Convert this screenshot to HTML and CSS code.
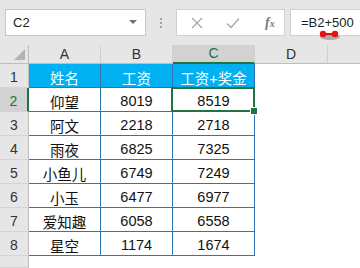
FILE: index.html
```html
<!doctype html>
<html lang="zh">
<head>
  <meta charset="utf-8">
  <title>工资表</title>
  <link rel="stylesheet" href="styles.css">
</head>
<body>
  <div class="bar">
    <div class="namebox">
      <span>C2</span>
      <span class="caret"></span>
    </div>
    <div class="dots"><i></i><i></i><i></i></div>
    <div class="buttons">
      <svg class="ico" width="14" height="14" viewBox="0 0 14 14"><path d="M2 2L12 12M12 2L2 12" stroke="#a8a8a8" stroke-width="1.3" fill="none"/></svg>
      <svg class="ico" width="16" height="14" viewBox="0 0 16 14"><path d="M2 7.5L6 11.5L14 2.5" stroke="#a8a8a8" stroke-width="1.4" fill="none"/></svg>
      <span class="fx">f<small>x</small></span>
    </div>
    <div class="formula">
      <span>=B2+500</span>
      <svg class="mark" width="24" height="12" viewBox="0 0 24 12">
        <ellipse cx="12" cy="8" rx="10" ry="3" fill="#000" opacity="0.25"/>
        <line x1="5" y1="5" x2="17" y2="5" stroke="#e01010" stroke-width="2"/>
        <circle cx="5" cy="5" r="3.2" fill="#e81010"/>
        <circle cx="17" cy="5" r="3.2" fill="#e81010"/>
      </svg>
    </div>
  </div>

  <div class="sheet">
    <div class="hd corner"><span class="tri"></span></div>
    <div class="hd">A</div>
    <div class="hd">B</div>
    <div class="hd sel">C</div>
    <div class="hd">D</div>
    <div class="hd last"></div>

    <div class="rn">1</div>
    <div class="c th">姓名</div>
    <div class="c th">工资</div>
    <div class="c th">工资+奖金</div>
    <div class="e"></div><div class="e"></div>

    <div class="rn sel">2</div>
    <div class="c">仰望</div>
    <div class="c">8019</div>
    <div class="c active">8519</div>
    <div class="e"></div><div class="e"></div>

    <div class="rn">3</div>
    <div class="c">阿文</div>
    <div class="c">2218</div>
    <div class="c">2718</div>
    <div class="e"></div><div class="e"></div>

    <div class="rn">4</div>
    <div class="c">雨夜</div>
    <div class="c">6825</div>
    <div class="c">7325</div>
    <div class="e"></div><div class="e"></div>

    <div class="rn">5</div>
    <div class="c">小鱼儿</div>
    <div class="c">6749</div>
    <div class="c">7249</div>
    <div class="e"></div><div class="e"></div>

    <div class="rn">6</div>
    <div class="c">小玉</div>
    <div class="c">6477</div>
    <div class="c">6977</div>
    <div class="e"></div><div class="e"></div>

    <div class="rn">7</div>
    <div class="c">爱知趣</div>
    <div class="c">6058</div>
    <div class="c">6558</div>
    <div class="e"></div><div class="e"></div>

    <div class="rn">8</div>
    <div class="c">星空</div>
    <div class="c">1174</div>
    <div class="c">1674</div>
    <div class="e"></div><div class="e"></div>

    <div class="rn"></div>
    <div class="e"></div><div class="e"></div><div class="e"></div><div class="e"></div><div class="e"></div>
  </div>
</body>
</html>
```

FILE: styles.css
```css
* {
  box-sizing: border-box;
}

body {
  margin: 0;
  width: 360px;
  height: 268px;
  overflow: hidden;
  background: #fff;
  font-family: "Liberation Sans", "Noto Sans CJK SC", sans-serif;
  color: #222;
}

.bar {
  height: 45px;
  background: #e6e6e6;
  display: flex;
  align-items: flex-start;
  padding-top: 9px;
}

.namebox {
  margin-left: 5px;
  width: 141px;
  height: 27px;
  background: #fff;
  border: 1px solid #c6c6c6;
  display: flex;
  align-items: center;
  justify-content: space-between;
  padding: 0 8px 0 7px;
  font-size: 13px;
}

.caret {
  width: 0;
  height: 0;
  border-left: 4px solid transparent;
  border-right: 4px solid transparent;
  border-top: 4px solid #707070;
  margin-bottom: 2px;
}

.dots {
  width: 30px;
  height: 27px;
  display: flex;
  flex-direction: column;
  align-items: center;
  justify-content: center;
  gap: 2px;
}

.dots i {
  width: 2px;
  height: 2px;
  background: #a0a0a0;
}

.buttons {
  width: 109px;
  height: 27px;
  background: #fff;
  border: 1px solid #d0d0d0;
  display: flex;
  align-items: center;
  padding-left: 13px;
  gap: 21px;
}

.fx {
  font-family: "Liberation Serif", serif;
  font-style: italic;
  font-weight: bold;
  color: #7a7a7a;
  font-size: 14px;
  margin-left: 3px;
}

.fx small {
  font-size: 10px;
}

.formula {
  position: relative;
  margin-left: 5px;
  flex: 1;
  height: 27px;
  background: #fff;
  border: 1px solid #d0d0d0;
  border-right: none;
  padding-left: 10px;
  display: flex;
  align-items: center;
  font-size: 13px;
}

.mark {
  position: absolute;
  left: 27px;
  top: 19px;
}

.sheet {
  display: grid;
  grid-template-columns: 29px 72px 72px 82px 73px 1fr;
  grid-template-rows: 19px repeat(8, 24px) 1fr;
  height: 223px;
}

.hd {
  background: #e6e6e6;
  border-right: 1px solid #cfcfcf;
  border-bottom: 1px solid #bdbdbd;
  font-size: 14px;
  color: #333;
  display: flex;
  align-items: flex-end;
  justify-content: center;
  padding-bottom: 1px;
}

.hd.last {
  border-right: none;
}

.hd.sel {
  background: #d2d2d2;
  color: #217346;
  border-bottom: 2px solid #217346;
}

.corner {
  position: relative;
  border-right-color: #bdbdbd;
}

.tri {
  position: absolute;
  right: 3px;
  bottom: 3px;
  width: 0;
  height: 0;
  border-left: 11px solid transparent;
  border-bottom: 11px solid #b4b4b4;
}

.rn {
  background: #e6e6e6;
  border-right: 1px solid #bdbdbd;
  border-bottom: 1px solid #d4d4d4;
  font-size: 14px;
  color: #333;
  display: flex;
  align-items: center;
  justify-content: center;
  padding-top: 3px;
}

.rn.sel {
  background: #d2d2d2;
  color: #217346;
  border-right: 2px solid #217346;
}

.c {
  border-right: 1px solid #2e75b6;
  border-bottom: 1px solid #2e75b6;
  font-size: 14.5px;
  color: #111;
  display: flex;
  align-items: center;
  justify-content: center;
  padding-top: 3px;
}

.c.th {
  background: #00b0f0;
  color: #fff;
}

.c.active {
  position: relative;
}

.c.active::before {
  content: "";
  position: absolute;
  left: -2px;
  top: -1px;
  right: -1px;
  bottom: -1px;
  border: 2px solid #217346;
}

.c.active::after {
  content: "";
  position: absolute;
  right: -4px;
  bottom: -4px;
  width: 6px;
  height: 6px;
  background: #217346;
  border: 1px solid #fff;
}

.e {
  background: #fff;
}
```
